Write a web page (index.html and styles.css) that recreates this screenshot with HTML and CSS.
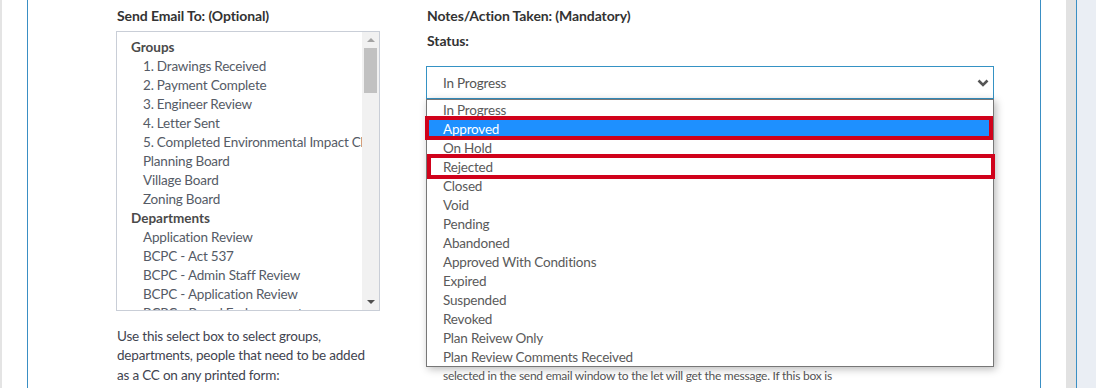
FILE: index.html
```html
<!DOCTYPE html>
<html lang="en">
<head>
<meta charset="utf-8">
<title>Status form</title>
<link rel="stylesheet" href="styles.css">
</head>
<body>
<div class="page">
  <div class="edge"></div>
  <div class="gutter"></div>
  <div class="card">
    <div class="col-left">
      <div class="label">Send Email To: (Optional)</div>
      <div class="listbox">
        <div class="list-content">
          <div class="group">Groups</div>
          <div class="opt">1. Drawings Received</div>
          <div class="opt">2. Payment Complete</div>
          <div class="opt">3. Engineer Review</div>
          <div class="opt">4. Letter Sent</div>
          <div class="opt">5. Completed Environmental Impact Checklist</div>
          <div class="opt">Planning Board</div>
          <div class="opt">Village Board</div>
          <div class="opt">Zoning Board</div>
          <div class="group">Departments</div>
          <div class="opt">Application Review</div>
          <div class="opt">BCPC - Act 537</div>
          <div class="opt">BCPC - Admin Staff Review</div>
          <div class="opt">BCPC - Application Review</div>
          <div class="opt">BCPC - Board Endorsement</div>
        </div>
        <div class="scrollbar">
          <div class="sb-btn"><span class="tri-up"></span></div>
          <div class="sb-track"><div class="sb-thumb"></div></div>
          <div class="sb-btn"><span class="tri-down"></span></div>
        </div>
      </div>
      <p class="help">Use this select box to select groups, departments, people that need to be added as a CC on any printed form:</p>
    </div>
    <div class="col-right">
      <div class="label">Notes/Action Taken: (Mandatory)</div>
      <div class="label status-label">Status:</div>
      <div class="select-wrap">
        <div class="select">
          <span>In Progress</span>
          <svg class="chev" width="12" height="8" viewBox="0 0 12 8"><polyline points="1.5,1.5 6,6 10.5,1.5" fill="none" stroke="#555" stroke-width="2.6"/></svg>
        </div>
        <div class="dropdown">
          <div class="ditem">In Progress</div>
          <div class="ditem active">Approved</div>
          <div class="ditem">On Hold</div>
          <div class="ditem">Rejected</div>
          <div class="ditem">Closed</div>
          <div class="ditem">Void</div>
          <div class="ditem">Pending</div>
          <div class="ditem">Abandoned</div>
          <div class="ditem">Approved With Conditions</div>
          <div class="ditem">Expired</div>
          <div class="ditem">Suspended</div>
          <div class="ditem">Revoked</div>
          <div class="ditem">Plan Reivew Only</div>
          <div class="ditem">Plan Review Comments Received</div>
          <div class="mark mark-approved"></div>
          <div class="mark mark-rejected"></div>
        </div>
      </div>
      <p class="note">selected in the send email window to the let will get the message. If this box is</p>
    </div>
  </div>
  <div class="gutter"></div>
  <div class="rail"></div>
  <div class="rail-line"></div>
  <div class="side"></div>
</div>
</body>
</html>
```

FILE: styles.css
```css
html, body {
  margin: 0;
  padding: 0;
  background: #fff;
}
body {
  font-family: Lato, "Noto Sans", "Liberation Sans", sans-serif;
  color: #555;
}
.page {
  display: flex;
  height: 388px;
  overflow: hidden;
}
.edge {
  width: 2px;
  background: #e4e4e4;
}
.gutter {
  width: 25px;
  background: #fff;
}
.card {
  width: 1014px;
  border-left: 1px solid #3a8fc4;
  border-right: 1px solid #3a8fc4;
  padding: 6px 0 0 88px;
  box-sizing: border-box;
  display: grid;
  grid-template-columns: 264px 568px;
  column-gap: 46px;
  align-items: start;
}
.rail {
  width: 10px;
  background: #e2e2e2;
}
.rail-line {
  width: 1px;
  background: #3a8fc4;
}
.side {
  flex: 1;
  background: #eaeef4;
}
.label {
  font-weight: 700;
  font-size: 14px;
  line-height: 20px;
  letter-spacing: -0.1px;
  color: #333;
  padding-left: 1px;
}
.col-left .label {
  margin-bottom: 5px;
}
.status-label {
  margin-top: 5px;
}
.listbox {
  height: 280px;
  border: 1px solid #c9ced7;
  box-sizing: border-box;
  display: flex;
  overflow: hidden;
}
.list-content {
  flex: 1;
  padding-top: 6px;
  overflow: hidden;
  font-size: 13.5px;
  letter-spacing: -0.2px;
  line-height: 19px;
}
.group {
  font-weight: 700;
  color: #4a4a4a;
  padding-left: 14px;
  white-space: nowrap;
  letter-spacing: 0;
}
.opt {
  color: #555b66;
  padding-left: 26px;
  white-space: nowrap;
}
.scrollbar {
  width: 17px;
  background: #f1f1f1;
  display: flex;
  flex-direction: column;
}
.sb-btn {
  height: 16px;
  display: flex;
  align-items: center;
  justify-content: center;
}
.sb-track {
  flex: 1;
  padding: 0 2px;
}
.sb-thumb {
  height: 45px;
  background: #c1c1c1;
}
.tri-up {
  width: 0;
  height: 0;
  border-left: 4px solid transparent;
  border-right: 4px solid transparent;
  border-bottom: 4px solid #a3a3a3;
}
.tri-down {
  width: 0;
  height: 0;
  border-left: 4px solid transparent;
  border-right: 4px solid transparent;
  border-top: 4px solid #505050;
}
.help {
  margin: 16px 0 0;
  padding-left: 1px;
  font-size: 13.5px;
  letter-spacing: -0.2px;
  line-height: 19.3px;
  color: #3f4450;
}
.select-wrap {
  position: relative;
  margin-top: 15px;
}
.select {
  height: 33px;
  border: 1px solid #3592c4;
  box-sizing: border-box;
  display: flex;
  align-items: center;
  justify-content: space-between;
  padding: 0 4px 0 16px;
  font-size: 13.5px;
  letter-spacing: -0.2px;
  color: #555;
  background: #fff;
}
.chev {
  display: block;
}
.dropdown {
  position: absolute;
  top: 33px;
  left: 0;
  width: 568px;
  box-sizing: border-box;
  border: 1px solid #777;
  background: #fff;
  box-shadow: 2px 2px 8px rgba(0, 0, 0, 0.28);
  z-index: 2;
}
.ditem {
  height: 19px;
  box-sizing: border-box;
  padding: 1px 0 0 16px;
  line-height: 19px;
  font-size: 13.5px;
  letter-spacing: -0.2px;
  color: #5a5a5a;
  white-space: nowrap;
}
.ditem.active {
  background: #1e90ff;
  color: #fff;
}
.mark {
  position: absolute;
  border: 4px solid #d0021b;
  box-sizing: border-box;
  width: 568px;
}
.mark-approved {
  left: -2px;
  top: 16px;
  height: 24px;
}
.mark-rejected {
  left: 0;
  top: 54px;
  height: 25px;
}
.note {
  margin: 269px 0 0;
  padding-left: 17px;
  font-size: 12px;
  letter-spacing: -0.25px;
  line-height: 16px;
  color: #555;
  white-space: nowrap;
}
```
